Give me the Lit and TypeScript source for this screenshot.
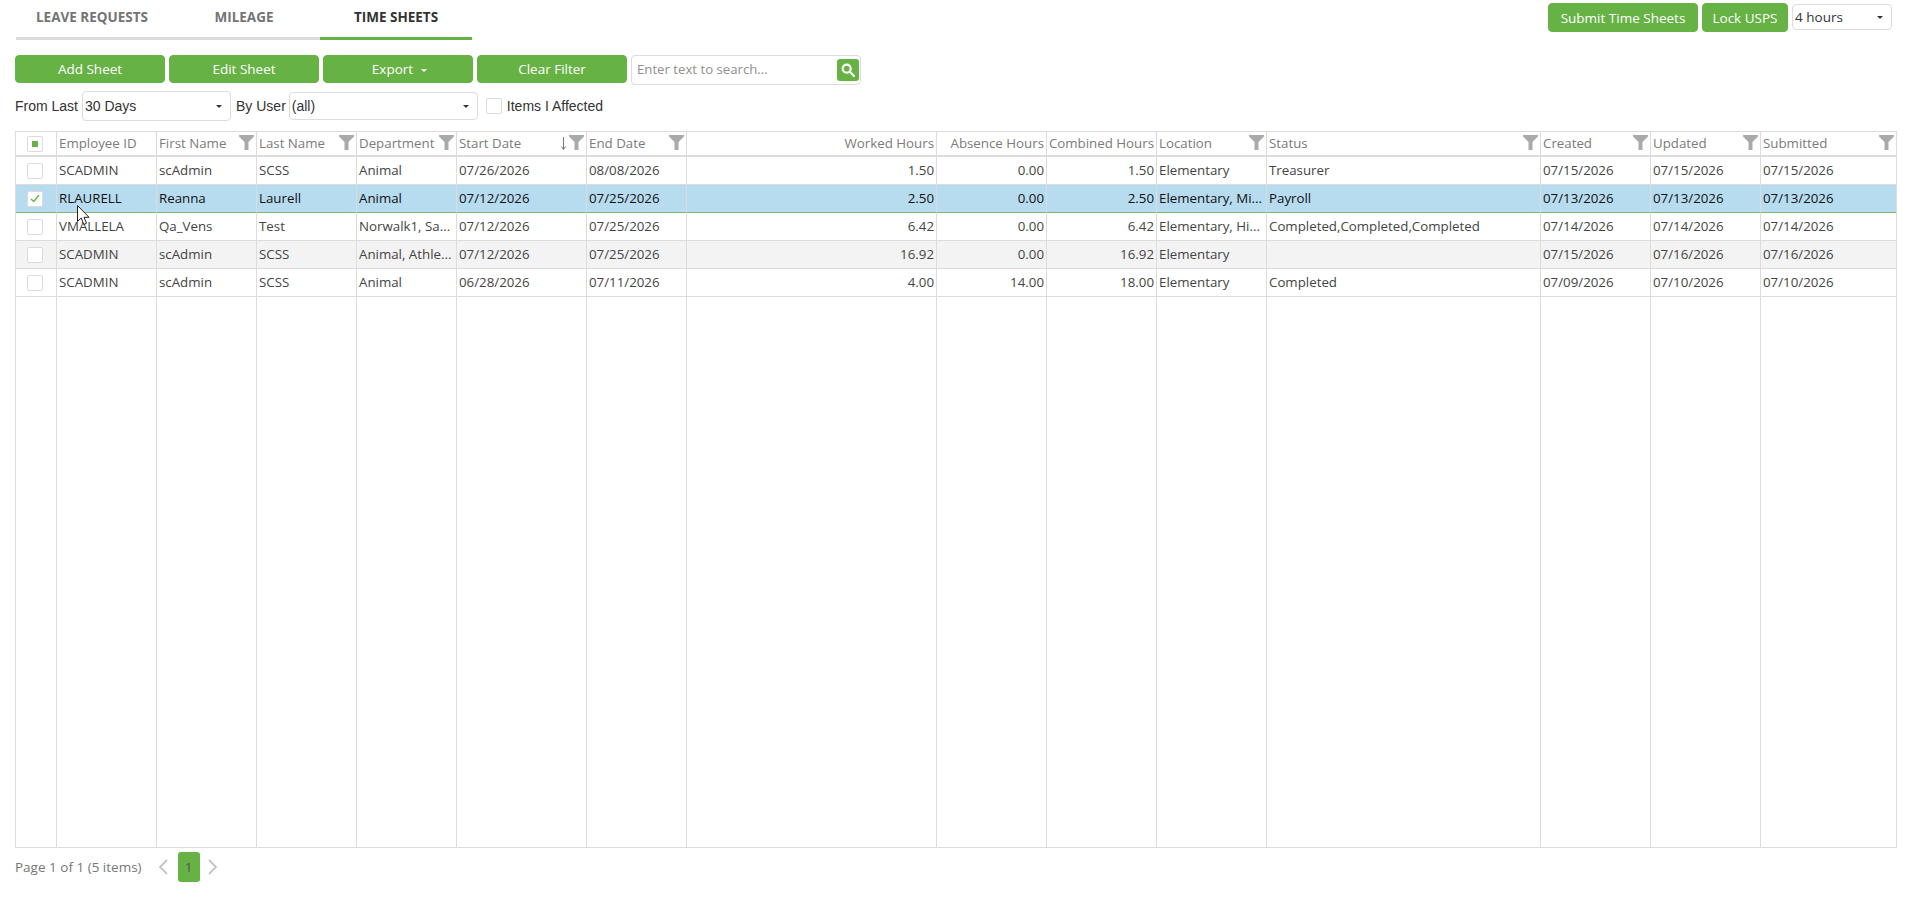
import { LitElement, html, css, svg } from "lit";
import { customElement } from "lit/decorators.js";

interface Col { label: string; filter: boolean; right?: boolean; sort?: boolean }

const COLS: Col[] = [
  { label: "Employee ID", filter: false },
  { label: "First Name", filter: true },
  { label: "Last Name", filter: true },
  { label: "Department", filter: true },
  { label: "Start Date", filter: true, sort: true },
  { label: "End Date", filter: true },
  { label: "Worked Hours", filter: false, right: true },
  { label: "Absence Hours", filter: false, right: true },
  { label: "Combined Hours", filter: false, right: true },
  { label: "Location", filter: true },
  { label: "Status", filter: true },
  { label: "Created", filter: true },
  { label: "Updated", filter: true },
  { label: "Submitted", filter: true },
];

const ROWS: { cells: string[]; kind: string }[] = [
  { kind: "", cells: ["SCADMIN", "scAdmin", "SCSS", "Animal", "07/26/2026", "08/08/2026", "1.50", "0.00", "1.50", "Elementary", "Treasurer", "07/15/2026", "07/15/2026", "07/15/2026"] },
  { kind: "sel", cells: ["RLAURELL", "Reanna", "Laurell", "Animal", "07/12/2026", "07/25/2026", "2.50", "0.00", "2.50", "Elementary, Mi...", "Payroll", "07/13/2026", "07/13/2026", "07/13/2026"] },
  { kind: "", cells: ["VMALLELA", "Qa_Vens", "Test", "Norwalk1, Sa...", "07/12/2026", "07/25/2026", "6.42", "0.00", "6.42", "Elementary, Hi...", "Completed,Completed,Completed", "07/14/2026", "07/14/2026", "07/14/2026"] },
  { kind: "alt", cells: ["SCADMIN", "scAdmin", "SCSS", "Animal, Athle...", "07/12/2026", "07/25/2026", "16.92", "0.00", "16.92", "Elementary", "", "07/15/2026", "07/16/2026", "07/16/2026"] },
  { kind: "", cells: ["SCADMIN", "scAdmin", "SCSS", "Animal", "06/28/2026", "07/11/2026", "4.00", "14.00", "18.00", "Elementary", "Completed", "07/09/2026", "07/10/2026", "07/10/2026"] },
];

const funnel = svg`<svg class="funnel" width="15" height="15" viewBox="0 0 15 15"><path d="M0 0H15V1.5L9.5 7V15H5.5V7L0 1.5Z" fill="#aaaaaa"/></svg>`;
const caret = html`<span class="caret"></span>`;

@customElement("app-root")
export class AppRoot extends LitElement {
  static styles = css`
    :host { display: block; height: 911px; overflow: hidden; background: #fff; position: relative;
      font-family: "Open Sans", "Noto Sans", sans-serif; font-size: 13.5px; color: #444; }
    .top { display: flex; justify-content: space-between; padding: 3px 17px 0 16px; height: 55px; box-sizing: border-box; }
    .tabs { display: flex; height: 37px; }
    .tab { width: 152px; height: 37px; box-sizing: border-box; border-bottom: 3px solid #dcdcdc; text-align: center;
      font-weight: 700; font-size: 13.5px; line-height: 29px; color: #747474; }
    .tab.on { border-bottom-color: #66b245; color: #333; }
    .top-right { display: flex; gap: 4px; align-items: flex-start; }
    .btn { height: 28px; box-sizing: border-box; background: #66b245; color: #fff; border-radius: 4px; display: flex;
      align-items: center; justify-content: center; border: 1px solid #66b245; }
    .b150 { width: 150px; }
    .b86 { width: 86px; }
    .b84h { height: 29px; }
    .caret { display: inline-block; width: 0; height: 0; border: 3px solid transparent; border-top: 3px solid currentColor; border-bottom: 0; }
    .btn .caret { margin-left: 8px; margin-top: 3px; }
    .exp { padding-left: 3px; }
    .select { box-sizing: border-box; height: 29px; border: 1px solid #dcdcdc; border-radius: 4px; background: #fff; display: flex;
      align-items: center; justify-content: space-between; padding: 0 8px 0 2px; color: #333; font-family: "Liberation Sans", sans-serif; font-size: 14px; }
    .sel100 { width: 100px; height: 26px; margin-top: 1px; font-family: "Open Sans", sans-serif; font-size: 13.5px; }
    .sel150 { width: 149px; height: 30px; }
    .sel188 { width: 189px; height: 28px; }
    .toolbar { display: flex; gap: 4px; padding-left: 15px; height: 29px; }
    .search { width: 230px; height: 30px; box-sizing: border-box; border: 1px solid #dcdcdc; border-radius: 4px; display: flex;
      align-items: center; justify-content: space-between; padding: 0 1px 0 5px; color: #8f8f8f; font-size: 13.2px; }
    .sbtn { width: 22px; height: 22px; background: #66b245; border-radius: 3px; display: flex; align-items: center; justify-content: center; }
    .ph { padding-bottom: 2px; }
    .filters { display: flex; align-items: center; padding: 7px 0 0 15px; height: 30px; font-family: "Liberation Sans", sans-serif; font-size: 14px; color: #333; }
    .filters .l1 { margin-right: 4px; }
    .filters .l2 { margin: 0 3px 0 5px; }
    .box { width: 16px; height: 16px; box-sizing: border-box; border: 1px solid #dcdcdc; border-radius: 2px; background: #fff;
      display: flex; align-items: center; justify-content: center; flex: none; }
    .filters .box { margin: 0 5px 0 8px; }
    .table { margin: 10px 0 0 15px; width: 1882px; height: 717px; box-sizing: border-box; border: 1px solid #dcdcdc; display: grid;
      font-size: 13.3px;
      grid-template-columns: 41px 100px 100px 100px 100px 130px 100px 250px 110px 110px 110px 274px 110px 110px 1fr;
      grid-template-rows: 25px repeat(5, 28px) 1fr; }
    .c { box-sizing: border-box; border-right: 1px solid #dcdcdc; border-bottom: 1px solid #dcdcdc; padding: 0 2px; display: flex;
      align-items: center; white-space: nowrap; overflow: hidden; min-width: 0; }
    .last { border-right: 0; }
    .h { color: #7b7b7b; border-bottom-width: 2px; padding-bottom: 1px; }
    .d { padding-bottom: 2px; }
    .h .funnel { margin-left: auto; flex: none; margin-top: -2px; }
    .h.right { justify-content: flex-end; }
    .h .arrow { margin-left: auto; margin-right: 3px; flex: none; }
    .h .arrow + .funnel { margin-left: 0; }
    .right { justify-content: flex-end; }
    .ck { justify-content: center; padding: 0 2px 0 0; }
    .sel { background: #b7dcef; color: #111; border-bottom-color: #7dba78; }
    .alt { background: #f3f3f3; }
    .foot { display: flex; align-items: center; padding: 3px 0 0 15px; height: 31px; color: #777; }
    .pg { margin-left: 16px; }
    .pnum { width: 22px; height: 30px; background: #66b245; border-radius: 3px; color: #555; display: flex; align-items: center; justify-content: center; margin: 0 8px 0 10px; }
    .cursor { position: absolute; left: 77px; top: 205px; }
    .nb { border-bottom: 0; }
  `;

  render() {
    return html`
      <div class="top">
        <div class="tabs">
          <div class="tab">LEAVE REQUESTS</div>
          <div class="tab">MILEAGE</div>
          <div class="tab on">TIME SHEETS</div>
        </div>
        <div class="top-right">
          <div class="btn b150 b84h">Submit Time Sheets</div>
          <div class="btn b86 b84h">Lock USPS</div>
          <div class="select sel100">4 hours ${caret}</div>
        </div>
      </div>
      <div class="toolbar">
        <div class="btn b150">Add Sheet</div>
        <div class="btn b150">Edit Sheet</div>
        <div class="btn b150 exp">Export ${caret}</div>
        <div class="btn b150">Clear Filter</div>
        <div class="search"><span class="ph">Enter text to search...</span>
          <div class="sbtn"><svg width="14" height="14" viewBox="0 0 14 14" fill="none" stroke="#fff" stroke-width="2.2"><circle cx="5.7" cy="5.7" r="4"/><path d="M8.7 8.7L13 13" stroke-linecap="round"/></svg></div>
        </div>
      </div>
      <div class="filters">
        <span class="l1">From Last</span>
        <div class="select sel150">30 Days ${caret}</div>
        <span class="l2">By User</span>
        <div class="select sel188">(all) ${caret}</div>
        <div class="box"></div>
        <span>Items I Affected</span>
      </div>
      <div class="table">
        <div class="c h ck"><div class="box"><svg width="6" height="6"><rect width="6" height="6" fill="#66b245"/></svg></div></div>
        ${COLS.map((c, i) => html`<div class="c h ${c.right ? "right" : ""} ${i === COLS.length - 1 ? "last" : ""}">${c.label}${c.sort
          ? html`<svg class="arrow" width="5" height="13" viewBox="0 0 5 13"><path d="M2.5 0V12M0.5 9.5L2.5 12.5L4.5 9.5" fill="none" stroke="#777"/></svg>`
          : ""}${c.filter ? funnel : ""}</div>`)}
        ${ROWS.map((r) => html`
          <div class="c ck ${r.kind}"><div class="box">${r.kind === "sel"
            ? html`<svg width="10" height="9" viewBox="0 0 10 9"><path d="M1 5L3.8 7.5L9 1" fill="none" stroke="#66b245" stroke-width="1.4"/></svg>`
            : ""}</div></div>
          ${r.cells.map((t, i) => html`<div class="c d ${r.kind} ${COLS[i].right ? "right" : ""} ${i === r.cells.length - 1 ? "last" : ""}">${t}</div>`)}
        `)}
        <div class="c nb"></div>
        ${COLS.map((_, i) => html`<div class="c nb ${i === COLS.length - 1 ? "last" : ""}"></div>`)}
      </div>
      <div class="foot">
        <span>Page 1 of 1 (5 items)</span>
        <svg class="pg" width="10" height="16" viewBox="0 0 10 16"><path d="M9 1L2 8L9 15" fill="none" stroke="#c4c4c4" stroke-width="1.8"/></svg>
        <div class="pnum">1</div>
        <svg width="10" height="16" viewBox="0 0 10 16"><path d="M1 1L8 8L1 15" fill="none" stroke="#c4c4c4" stroke-width="1.8"/></svg>
      </div>
      <svg class="cursor" width="14" height="21" viewBox="0 0 14 21"><path d="M0.5 0.5V16.5L4.2 13L6.8 19.5L9.5 18.3L7 12.3H12Z" fill="#fff" stroke="#222" stroke-width="1"/></svg>
    `;
  }
}
